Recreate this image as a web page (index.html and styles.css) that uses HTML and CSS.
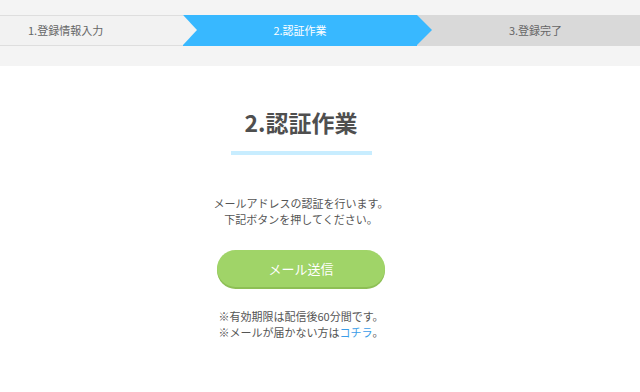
FILE: index.html
```html
<!DOCTYPE html>
<html lang="ja">
<head>
    <meta charset="UTF-8">
    <meta name="viewport" content="width=device-width, initial-scale=1.0">
    <title>認証作業</title>
    <link rel="stylesheet" href="styles.css">
</head>
<body>
    <!-- ステップ表示 -->
    <div class="header">
        <ol class="steps">
            <li class="step step-first">1.登録情報入力</li>
            <li class="step step-current">2.認証作業</li>
            <li class="step step-last">3.登録完了</li>
        </ol>
    </div>

    <div class="container">
        <h1 class="title">2.認証作業</h1>
        <span class="title-line"></span>

        <p class="lead">メールアドレスの認証を行います。<br>下記ボタンを押してください。</p>

        <button type="button" class="send-btn">メール送信</button>

        <p class="note">※有効期限は配信後60分間です。<br>※メールが届かない方は<a href="#">コチラ</a>。</p>
    </div>
</body>
</html>
```

FILE: styles.css
```css
body {
    margin: 0;
    padding: 0;
    font-family: "Noto Sans CJK JP", "Noto Sans", sans-serif;
    background-color: #fff;
    color: #555;
}

.header {
    background-color: #f4f4f4;
    padding: 15px 0 20px;
}

.steps {
    display: flex;
    margin: 0;
    padding: 0;
    list-style: none;
    height: 31px;
}

.step {
    position: relative;
    box-sizing: border-box;
    height: 31px;
    line-height: 29px;
    font-size: 11px;
}

.step-first {
    width: 183px;
    padding-left: 28px;
    background-color: #f2f2f2;
    border-top: 1px solid #dedede;
    border-bottom: 1px solid #dedede;
    color: #666;
    z-index: 2;
}

.step-first::after {
    content: "";
    position: absolute;
    top: -1px;
    right: -14px;
    border-left: 14px solid #f2f2f2;
    border-top: 15.5px solid transparent;
    border-bottom: 15.5px solid transparent;
}

.step-current {
    width: 234px;
    line-height: 31px;
    text-align: center;
    background-color: #38b8ff;
    color: #fff;
    z-index: 1;
}

.step-current::after {
    content: "";
    position: absolute;
    top: 0;
    right: -15px;
    border-left: 15px solid #38b8ff;
    border-top: 15.5px solid transparent;
    border-bottom: 15.5px solid transparent;
}

.step-last {
    flex: 1;
    padding-left: 14px;
    line-height: 31px;
    text-align: center;
    background-color: #d9d9d9;
    color: #666;
}

.container {
    text-align: center;
    padding: 0 38px 40px 0;
}

.title {
    margin: 39px 0 0;
    font-size: 23px;
    line-height: 34px;
    font-weight: bold;
    color: #4f4f4f;
}

.title-line {
    display: block;
    width: 141px;
    height: 4px;
    margin: 12px auto 0;
    background-color: #c8edff;
}

.lead {
    margin: 40px 0 0;
    font-size: 11px;
    line-height: 16px;
}

.send-btn {
    display: block;
    width: 168px;
    height: 37px;
    margin: 23px auto 0;
    padding: 0;
    border: none;
    border-radius: 19px;
    background-color: #a0d468;
    box-shadow: 0 2px 0 #8dbf55;
    color: #fff;
    font-family: inherit;
    font-size: 13px;
    cursor: pointer;
}

.send-btn:hover {
    background-color: #93c95a;
}

.note {
    margin: 21px 0 0;
    font-size: 11px;
    line-height: 16px;
}

.note a {
    color: #3b9de8;
    text-decoration: none;
}
```
